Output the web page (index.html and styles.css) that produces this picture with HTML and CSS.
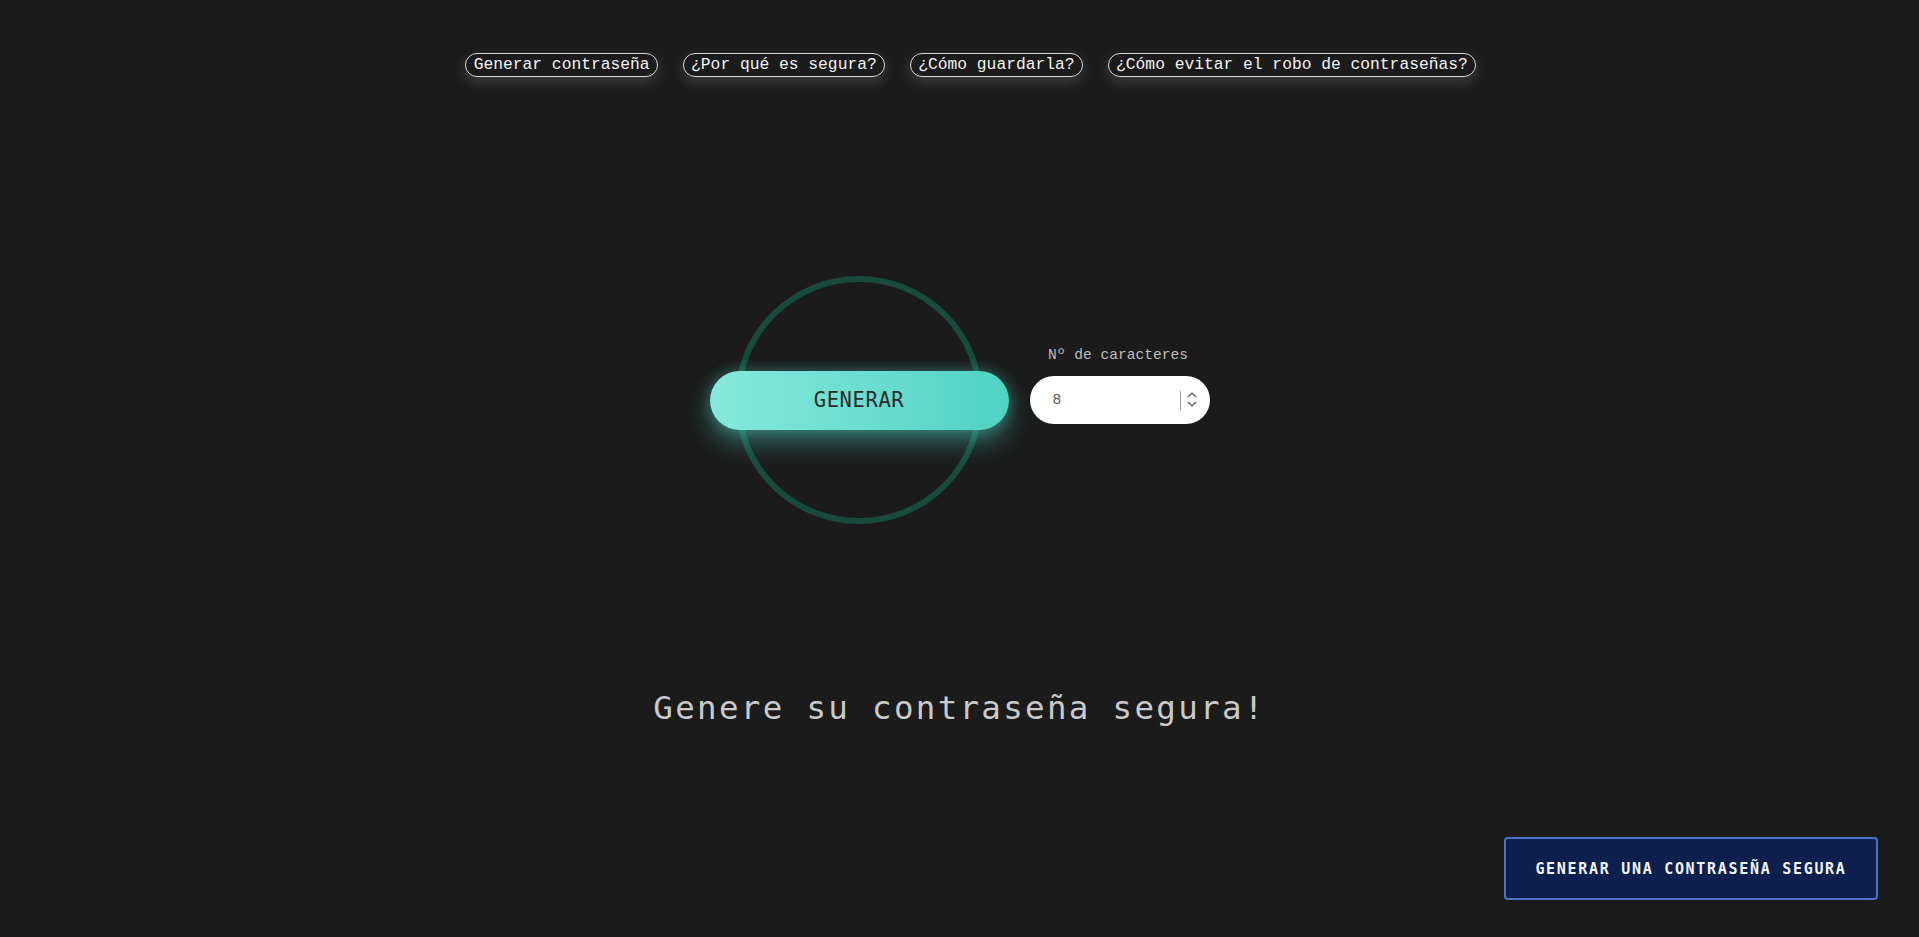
FILE: index.html
```html
<!DOCTYPE html>
<html lang="es">
<head>
<meta charset="utf-8">
<title>Generador de contraseñas</title>
<link rel="stylesheet" href="styles.css">
</head>
<body>
<nav class="nav">
  <a class="pill" href="#">Generar contraseña</a>
  <a class="pill" href="#">¿Por qué es segura?</a>
  <a class="pill" href="#">¿Cómo guardarla?</a>
  <a class="pill" href="#">¿Cómo evitar el robo de contraseñas?</a>
</nav>
<main class="main">
  <section class="generator">
    <div class="ring-wrap">
      <div class="ring"></div>
      <button class="generate-btn">GENERAR</button>
    </div>
    <div class="length-field">
      <label class="length-label" for="len">Nº de caracteres</label>
      <div class="number-box">
        <input id="len" class="number-input" type="text" value="8">
        <span class="spin-divider"></span>
        <svg class="spin" width="12" height="18" viewBox="0 0 12 18" aria-hidden="true">
          <path d="M2 6 L6 2 L10 6" fill="none" stroke="#555" stroke-width="1.2"/>
          <path d="M2 11 L6 15 L10 11" fill="none" stroke="#555" stroke-width="1.2"/>
        </svg>
      </div>
    </div>
  </section>
  <h1 class="title">Genere su contraseña segura!</h1>
</main>
<button class="cta">GENERAR UNA CONTRASEÑA SEGURA</button>
</body>
</html>
```
FILE: styles.css
```css
html, body {
  margin: 0;
  padding: 0;
}
body {
  background: #1b1b1b;
  min-height: 100vh;
  font-family: "Liberation Mono", monospace;
  color: #f0f0f0;
}
.nav {
  display: flex;
  justify-content: center;
  gap: 25px;
  padding: 53px 0 0 22px;
}
.pill {
  display: block;
  height: 22px;
  line-height: 22px;
  padding: 0 7px 0 7.5px;
  border: 1px solid #d8d8d8;
  border-radius: 12px;
  color: #f2f2f2;
  text-decoration: none;
  font-family: "Liberation Mono", monospace;
  font-size: 16.3px;
  white-space: nowrap;
  box-shadow: 0 5px 14px rgba(255, 255, 255, 0.16);
}
.main {
  display: flex;
  flex-direction: column;
  align-items: center;
}
.generator {
  display: flex;
  align-items: center;
  gap: 21px;
  margin-top: 199px;
}
.ring-wrap {
  position: relative;
  width: 299px;
  height: 248px;
  display: flex;
  align-items: center;
  justify-content: center;
}
.ring {
  position: absolute;
  left: 25.5px;
  top: 0;
  width: 236px;
  height: 236px;
  border: 6px solid #174b3d;
  border-radius: 50%;
}
.generate-btn {
  position: relative;
  width: 299px;
  height: 59px;
  border: none;
  border-radius: 30px;
  background: linear-gradient(90deg, #86e9db 0%, #6ddfd2 45%, #4fd2c4 100%);
  color: #2c2c2c;
  font-family: "DejaVu Sans Mono", monospace;
  font-size: 20.5px;
  letter-spacing: 0.6px;
  box-shadow: 0 12px 26px rgba(78, 210, 196, 0.45), 0 0 14px rgba(78, 210, 196, 0.35);
  cursor: pointer;
  padding: 0;
}
.length-field {
  display: flex;
  flex-direction: column;
  align-items: center;
  padding-bottom: 29px;
}
.length-label {
  font-family: "Liberation Mono", monospace;
  font-size: 14.6px;
  line-height: 17px;
  color: #bdbdbd;
  margin: 0 3px 12px 0;
}
.number-box {
  width: 180px;
  height: 48px;
  box-sizing: border-box;
  background: #fff;
  border-radius: 24px;
  display: flex;
  align-items: center;
  padding: 0 12px 0 23px;
}
.number-input {
  flex: 1;
  min-width: 0;
  border: none;
  outline: none;
  background: transparent;
  font-family: "Liberation Mono", monospace;
  font-size: 14.5px;
  color: #555;
  padding: 0;
}
.spin-divider {
  width: 1px;
  height: 19px;
  background: #9a9a9a;
  margin-right: 5px;
}
.spin {
  display: block;
}
.title {
  margin: 164px 0 0;
  font-family: "DejaVu Sans Mono", monospace;
  font-weight: normal;
  font-size: 32.5px;
  line-height: 40px;
  letter-spacing: 2.3px;
  color: #c9c9c9;
  text-align: center;
}
.cta {
  position: fixed;
  right: 41px;
  bottom: 37px;
  width: 374px;
  height: 63px;
  background: #0c1f4e;
  border: 2px solid #4b73c9;
  border-radius: 4px;
  color: #f4f4f4;
  font-family: "DejaVu Sans Mono", monospace;
  font-weight: bold;
  font-size: 15px;
  letter-spacing: 1.7px;
  cursor: pointer;
  padding: 0;
}
```
